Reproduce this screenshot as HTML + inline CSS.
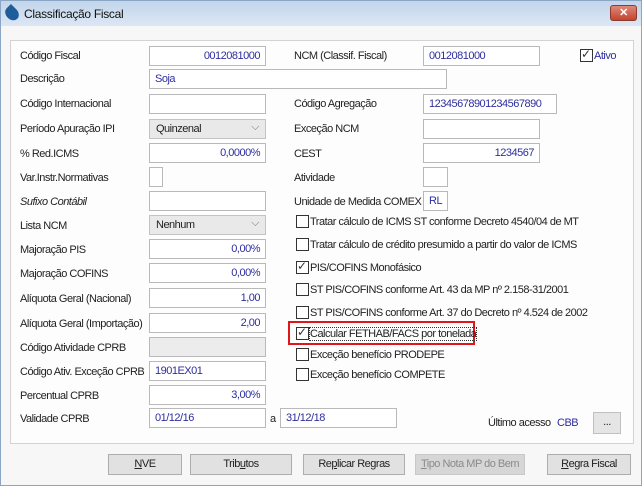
<!DOCTYPE html>
<html><head><meta charset="utf-8"><style>
*{box-sizing:border-box}
body{margin:0;width:642px;height:486px;overflow:hidden;font-family:"Liberation Sans",sans-serif;font-size:11px;letter-spacing:-0.5px;color:#222;background:#fff;position:relative}
.win{position:absolute;left:0;top:0;width:642px;height:486px;border:1px solid #8aa6c4;background:#f7f7f7}
.title{position:absolute;left:0;top:0;width:640px;height:25px;background:linear-gradient(#c2d5ec,#dce7f4);}
.title span{position:absolute;left:23px;top:6px;font-size:12px;color:#111;letter-spacing:-0.3px}
.drop{position:absolute;left:5px;top:5px;width:12px;height:15px;background:#1f5d9a;border-radius:50% 0 50% 50%;transform:rotate(-45deg)}
.close{position:absolute;left:609px;top:4px;width:27px;height:16px;background:linear-gradient(#e0887a,#c2452f);border:1px solid #8e3a2c;border-radius:3px;color:#fff;text-align:center;font-size:11px;font-weight:bold;line-height:14px}
.panel{position:absolute;left:9px;top:39px;width:624px;height:404px;border:1px solid #d3d3d3;background:#fdfdfd}
.l{position:absolute;white-space:nowrap}
.i{position:absolute;height:20px;border:1px solid #b9b9b9;background:#fff;color:#2e2e9e;padding:3px 5px;white-space:nowrap}
.r{text-align:right}
.sel{position:absolute;height:20px;border:1px solid #c3c3c3;background:#e9e9e9;padding:3px 6px}
.sel:after{content:"⌵";position:absolute;right:6px;top:1px;color:#777}
.cb{position:absolute;width:13px;height:13px;border:1px solid #333;background:#fff}
.ck:after{content:"✓";position:absolute;left:0;top:-3px;font-size:12px;color:#333}
.btn{position:absolute;top:453px;height:21px;border:1px solid #adadad;background:#e1e1e1;text-align:center;line-height:19px}
</style></head><body>
<div class="win">
<div class="title"><div class="drop"></div><span>Classificação Fiscal</span><div class="close">✕</div></div>
<div class="panel"></div>

<div class="l" style="left:19px;top:49px">Código Fiscal</div>
<div class="i r" style="left:148px;top:45px;width:117px">0012081000</div>
<div class="l" style="left:293px;top:49px">NCM (Classif. Fiscal)</div>
<div class="i" style="left:422px;top:45px;width:117px">0012081000</div>
<div class="cb ck" style="left:579px;top:48px"></div><div class="l" style="left:593px;top:49px;color:#2e2e9e">Ativo</div>

<div class="l" style="left:19px;top:72px">Descrição</div>
<div class="i" style="left:148px;top:68px;width:298px">Soja</div>

<div class="l" style="left:19px;top:97px">Código Internacional</div>
<div class="i" style="left:148px;top:93px;width:117px"></div>
<div class="l" style="left:293px;top:97px">Código Agregação</div>
<div class="i" style="left:422px;top:93px;width:134px">12345678901234567890</div>

<div class="l" style="left:19px;top:122px">Período Apuração IPI</div>
<div class="sel" style="left:148px;top:118px;width:117px">Quinzenal</div>
<div class="l" style="left:293px;top:122px">Exceção NCM</div>
<div class="i" style="left:422px;top:118px;width:117px"></div>

<div class="l" style="left:19px;top:147px">% Red.ICMS</div>
<div class="i r" style="left:148px;top:142px;width:117px">0,0000%</div>
<div class="l" style="left:293px;top:147px">CEST</div>
<div class="i r" style="left:422px;top:142px;width:117px">1234567</div>

<div class="l" style="left:19px;top:171px">Var.Instr.Normativas</div>
<div class="i" style="left:148px;top:166px;width:14px"></div>
<div class="l" style="left:293px;top:171px">Atividade</div>
<div class="i" style="left:422px;top:166px;width:25px"></div>

<div class="l" style="left:19px;top:195px;font-style:italic">Sufixo Contábil</div>
<div class="i" style="left:148px;top:190px;width:117px"></div>
<div class="l" style="left:293px;top:195px">Unidade de Medida COMEX</div>
<div class="i" style="left:422px;top:190px;width:25px">RL</div>

<div class="l" style="left:19px;top:219px">Lista NCM</div>
<div class="sel" style="left:148px;top:214px;width:117px">Nenhum</div>

<div class="l" style="left:19px;top:243px">Majoração PIS</div>
<div class="i r" style="left:148px;top:238px;width:117px">0,00%</div>
<div class="l" style="left:19px;top:267px">Majoração COFINS</div>
<div class="i r" style="left:148px;top:262px;width:117px">0,00%</div>
<div class="l" style="left:19px;top:292px">Alíquota Geral (Nacional)</div>
<div class="i r" style="left:148px;top:287px;width:117px">1,00</div>
<div class="l" style="left:19px;top:317px">Alíquota Geral (Importação)</div>
<div class="i r" style="left:148px;top:312px;width:117px">2,00</div>
<div class="l" style="left:19px;top:341px">Código Atividade CPRB</div>
<div class="i" style="left:148px;top:336px;width:117px;background:#ececec"></div>
<div class="l" style="left:19px;top:365px">Código Ativ. Exceção CPRB</div>
<div class="i" style="left:148px;top:360px;width:117px">1901EX01</div>
<div class="l" style="left:19px;top:389px">Percentual CPRB</div>
<div class="i r" style="left:148px;top:384px;width:117px">3,00%</div>
<div class="l" style="left:19px;top:412px">Validade CPRB</div>
<div class="i" style="left:148px;top:407px;width:117px">01/12/16</div>
<div class="l" style="left:269px;top:412px">a</div>
<div class="i" style="left:279px;top:407px;width:117px">31/12/18</div>

<div class="cb" style="left:295px;top:214px"></div><div class="l" style="left:309px;top:215px">Tratar cálculo de ICMS ST conforme Decreto 4540/04 de MT</div>
<div class="cb" style="left:295px;top:237px"></div><div class="l" style="left:309px;top:238px">Tratar cálculo de crédito presumido a partir do valor de ICMS</div>
<div class="cb ck" style="left:295px;top:260px"></div><div class="l" style="left:309px;top:261px">PIS/COFINS Monofásico</div>
<div class="cb" style="left:295px;top:282px"></div><div class="l" style="left:309px;top:283px">ST PIS/COFINS conforme Art. 43 da MP nº 2.158-31/2001</div>
<div class="cb" style="left:295px;top:305px"></div><div class="l" style="left:309px;top:306px">ST PIS/COFINS conforme Art. 37 do Decreto nº 4.524 de 2002</div>
<div style="position:absolute;left:287px;top:320px;width:187px;height:24px;border:2px solid #e0161b"></div>
<div class="cb ck" style="left:295px;top:326px"></div><div class="l" style="left:309px;top:327px;outline:1px dotted #333">Calcular FETHAB/FACS por tonelada</div>
<div class="cb" style="left:295px;top:347px"></div><div class="l" style="left:309px;top:348px">Exceção benefício PRODEPE</div>
<div class="cb" style="left:295px;top:367px"></div><div class="l" style="left:309px;top:368px">Exceção benefício COMPETE</div>

<div class="l" style="left:487px;top:416px">Último acesso</div>
<div class="l" style="left:556px;top:416px;color:#2e2e9e">CBB</div>
<div class="btn" style="left:592px;top:411px;width:28px;height:22px;background:#e5e5e5;border-color:#c0c0c0">...</div>

<div class="btn" style="left:107px;width:74px"><u>N</u>VE</div>
<div class="btn" style="left:189px;width:102px">Trib<u>u</u>tos</div>
<div class="btn" style="left:302px;width:102px">Re<u>p</u>licar Regras</div>
<div class="btn" style="left:414px;width:110px;background:#d6d6d6;color:#8a8a8a;border-color:#c8c8c8"><u>T</u>ipo Nota MP do Bem</div>
<div class="btn" style="left:546px;width:84px"><u>R</u>egra Fiscal</div>
</div>
</body></html>
